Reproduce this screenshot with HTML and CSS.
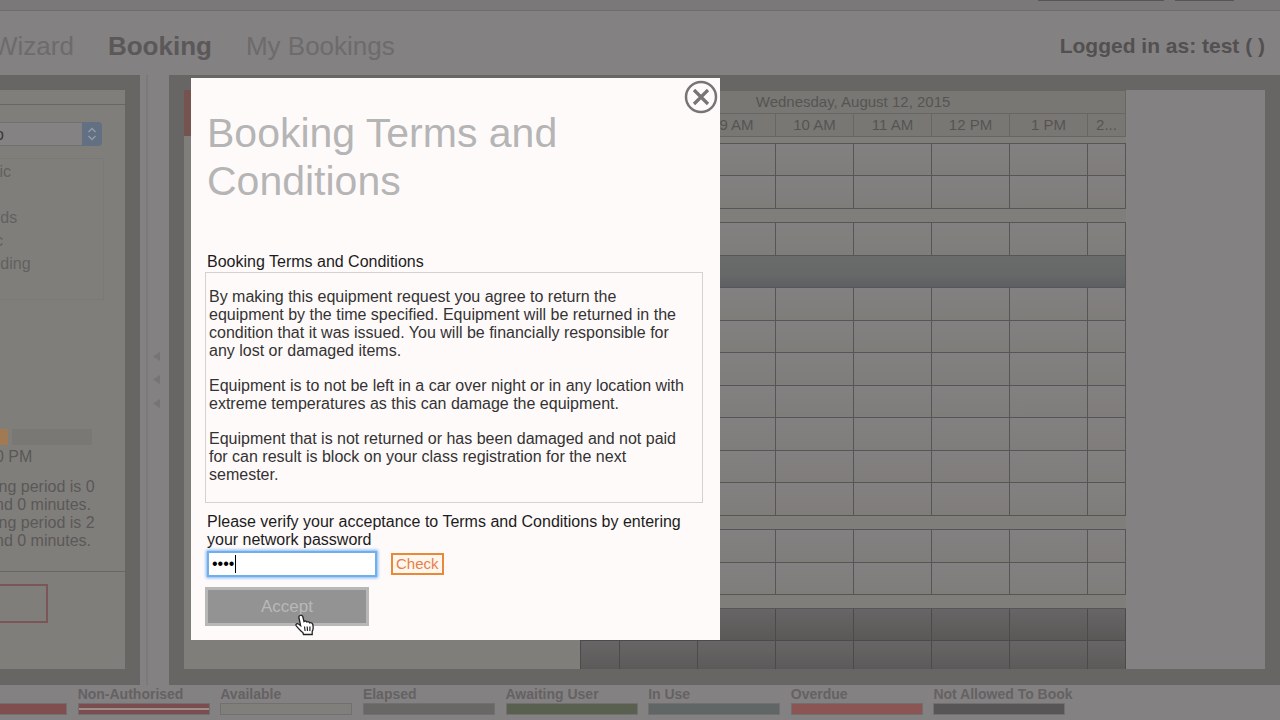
FILE: index.html
```html
<!DOCTYPE html>
<html lang="en">
<head>
  <meta charset="UTF-8">
  <meta name="viewport" content="width=device-width, initial-scale=1.0">
  <title>Booking</title>
  <link rel="stylesheet" href="styles.css">
</head>
<body>
  <div class="topbar"><span class="toplink wide"></span><span class="toplink"></span></div>

  <header class="header">
    <nav class="tabs">
      <a href="#">Wizard</a>
      <a href="#" class="active">Booking</a>
      <a href="#">My Bookings</a>
    </nav>
    <div class="user">Logged in as: test ( )</div>
  </header>

  <main class="main">
    <aside class="sidebar">
      <div class="filter">
        <div class="select-wrap">
          <select class="select" aria-label="Category"><option>o</option></select>
          <svg class="arrows" viewBox="0 0 20 24" width="20" height="24">
            <path d="M6.500 10 L10 6.500 L13.500 10 M6.500 14 L10 17.500 L13.500 14" fill="none" stroke="#929aa6" stroke-width="1.500"/>
          </svg>
        </div>
        <ul class="categories">
          <li>tic</li>
          <li></li>
          <li>rds</li>
          <li>c</li>
          <li>rding</li>
        </ul>
        <div class="slider"><span class="slider-on"></span><span class="slider-off"></span></div>
        <p class="time">0 PM</p>
        <p class="period">ing period is 0<br>nd 0 minutes.<br>ing period is 2<br>nd 0 minutes.</p>
      </div>
      <div class="actions"><button class="outline-btn" type="button" aria-label="Book"></button></div>
    </aside>

    <div class="splitter">
      <svg viewBox="0 0 8 56" width="8" height="56" fill="#777475">
        <path d="M7 0 V9 L0 4.500 Z M7 23 V32 L0 27.500 Z M7 47 V56 L0 51.500 Z"/>
      </svg>
    </div>

    <section class="schedule">
      <div class="resources"><div class="resources-head"></div></div>
      <div class="grid-wrap">
        <table class="grid">
          <colgroup><col class="half"><col><col><col><col><col><col><col class="half"></colgroup>
          <thead>
            <tr><th colspan="8">Wednesday, August 12, 2015</th></tr>
            <tr><th></th><th>8 AM</th><th>9 AM</th><th>10 AM</th><th>11 AM</th><th>12 PM</th><th>1 PM</th><th>2...</th></tr>
          </thead>
          <tbody id="slots"></tbody>
        </table>
      </div>
    </section>
  </main>

  <footer class="legend">
    <div class="key"><span></span><div class="bar red"></div></div>
    <div class="key"><span>Non-Authorised</span><div class="bar striped"></div></div>
    <div class="key"><span>Available</span><div class="bar available"></div></div>
    <div class="key"><span>Elapsed</span><div class="bar elapsed"></div></div>
    <div class="key"><span>Awaiting User</span><div class="bar awaiting"></div></div>
    <div class="key"><span>In Use</span><div class="bar in-use"></div></div>
    <div class="key"><span>Overdue</span><div class="bar overdue"></div></div>
    <div class="key"><span>Not Allowed To Book</span><div class="bar not-allowed"></div></div>
  </footer>

  <div class="modal" role="dialog" aria-labelledby="title">
    <button class="close" type="button" aria-label="Close">
      <svg viewBox="0 0 34 34" width="34" height="34" fill="none" stroke="#777475">
        <circle cx="17" cy="17" r="15" stroke-width="2.500"/>
        <path d="M10 10 L24 24 M24 10 L10 24" stroke-width="3.200"/>
      </svg>
    </button>
    <h1 id="title">Booking Terms and Conditions</h1>
    <h2>Booking Terms and Conditions</h2>
    <div class="terms">
      <p>By making this equipment request you agree to return the equipment by the time specified. Equipment will be returned in the condition that it was issued. You will be financially responsible for any lost or damaged items.</p>
      <p>Equipment is to not be left in a car over night or in any location with extreme temperatures as this can damage the equipment.</p>
      <p>Equipment that is not returned or has been damaged and not paid for can result is block on your class registration for the next semester.</p>
    </div>
    <form class="verify">
      <label for="password">Please verify your acceptance to Terms and Conditions by entering your network password</label>
      <div class="row">
        <div class="field">
          <input type="password" id="password" value="test">
          <span class="caret"></span>
        </div>
        <button class="check" type="button">Check</button>
      </div>
      <button class="accept" type="button">Accept
        <svg class="pointer" viewBox="0 0 20 22" width="20" height="22">
          <path d="M5 1.500 C6.500 0.600 7.600 1.800 7.900 3 L9 7.500 C10 6.600 11.500 7 11.900 8 C13 7.300 14.300 7.800 14.700 8.900 C16 8.300 17.500 9.200 17.800 10.500 C18.500 13.500 18.600 15 17.200 17.500 L17.200 20.500 L8.500 20.500 L7.800 18.500 C5.500 16.800 3.500 14.500 1.200 11.800 C0.300 10 2.200 9 3.500 10 L5.600 11.700 L3.900 3.500 C3.700 2.500 4 1.900 5 1.500 Z" fill="#fff" stroke="#222" stroke-width="1.300"/>
          <path d="M9.500 12.500 L10.100 17 M12.200 12.500 L12.500 17 M14.900 12.500 L14.900 17" stroke="#222" stroke-width="1.200"/>
        </svg>
      </button>
    </form>
  </div>

  <script>
    // one letter per row: s = free slots, g = gap, b = group bar, d = not allowed
    const rows = 'gssgsbsssssssgssgdd';
    document.getElementById('slots').innerHTML = [...rows].map(r => {
      if (r === 'g') return '<tr class="gap"><td colspan="8"></td></tr>';
      if (r === 'b') return '<tr class="group"><td colspan="8"></td></tr>';
      return `<tr class="${r === 'd' ? 'dark' : 'slot'}">${'<td></td>'.repeat(8)}</tr>`;
    }).join('');
  </script>
</body>
</html>
```
FILE: styles.css
```css
* { box-sizing: border-box; }
body { margin: 0; min-height: 100vh; display: flex; flex-direction: column; overflow: hidden; font: 16px/18px "Liberation Sans", Arial, sans-serif; color: #5a5858; background: #848182; }
h1, h2, p, ul { margin: 0; padding: 0; font-weight: normal; }
button, input, select { font-family: inherit; }

.topbar { height: 11px; display: flex; justify-content: flex-end; gap: 11px; padding-right: 46px; background: #7b7879; border-bottom: 1px solid #6f6d6d; }
.toplink { width: 59px; height: 1px; background: #575555; }
.toplink.wide { width: 126px; }

.header { height: 64px; display: flex; justify-content: space-between; align-items: center; padding: 6px 15px 0 0; }
.tabs { display: flex; gap: 34px; margin-left: -7px; font-size: 26px; line-height: 30px; }
.tabs a { color: #6d6b6b; text-decoration: none; }
.tabs a.active { color: #5a5858; font-weight: bold; }
.user { font-size: 21px; line-height: 24px; font-weight: bold; color: #525050; }

.main { height: 610px; display: flex; }
.sidebar { width: 140px; border: 15px solid #676664; border-left: 0; border-bottom-width: 16px; background: #807e7b; overflow: hidden; }
.filter { height: 482px; padding-top: 14px; border-bottom: 1px solid #696765; }
.filter::before { content: ""; display: block; height: 1px; margin-bottom: 17px; background: #696765; }
.select-wrap { position: relative; width: 108px; height: 24px; margin-left: -6px; }
.select { width: 100%; height: 24px; padding: 0; border: 1px solid #716f70; border-radius: 4px; appearance: none; background: #858283; color: #3c3a3a; font-size: 16px; }
.arrows { position: absolute; right: 0; top: 0; background: #637083; border-radius: 0 4px 4px 0; }
.categories { width: 110px; height: 142px; margin: 12px 0 0 -6px; padding-top: 1px; list-style: none; color: #626060; border: 1px solid #7b7976; }
.categories li { height: 23px; line-height: 23px; }
.slider { display: flex; gap: 4px; margin-top: 129px; }
.slider-on { width: 8px; height: 16px; background: #a17a53; }
.slider-off { width: 80px; height: 16px; background: #7a7875; }
.time { margin: 3px 0 0 -5px; }
.period { margin: 12px 0 0 -5px; white-space: nowrap; }
.actions { padding-top: 12px; }
.outline-btn { display: block; width: 54px; height: 39px; margin-left: -6px; border: 2px solid #7c5556; background: none; }

.splitter { width: 29px; display: flex; align-items: center; padding-left: 13px; background: linear-gradient(90deg, transparent 6px, #7c797a 6px, #7c797a 8px, transparent 8px); }
.schedule { flex: 1; display: flex; min-width: 0; border: 15px solid #676664; border-bottom-width: 16px; }
.resources { width: 396px; background: #807e7b; }
.resources-head { height: 46px; background: #75534e; }
.grid-wrap { overflow: hidden; }

.grid { width: 545px; table-layout: fixed; border-collapse: collapse; background: #807e7b; }
.grid col { width: 78px; }
.grid col.half { width: 39px; }
.grid col.half:last-child { width: 38px; }
.grid th { height: 23px; padding: 0; font-size: 15px; line-height: 18px; font-weight: normal; color: #565453; background: #797774; border: 1px solid #686664; }
.grid td { padding: 0; border: 1px solid #575555; }
.grid .slot, .grid .dark { height: 33px; }
.grid .slot:nth-child(even), .grid .dark:nth-child(even) { height: 32px; }
.grid .slot { background: linear-gradient(#838081, #7f7d7a); }
.grid .dark { background: linear-gradient(#686566, #5a5857); }
.grid .dark td { border-color: #4c4a4a; }
.grid .group { height: 32px; background: linear-gradient(#6a6b6b, #666867 60%, #5c5f63); }
.grid .gap { height: 14px; }
.grid .gap:first-child { height: 7px; }
.grid .gap td { border-left-color: transparent; border-right-color: transparent; }

.legend { width: 1141px; height: 35px; display: grid; grid-template-columns: repeat(8, 1fr); margin-left: -65px; padding-top: 1px; font-size: 14px; line-height: 17px; font-weight: bold; color: #646263; white-space: nowrap; overflow: hidden; }
.key span { display: block; height: 17px; }
.bar { width: 132px; height: 12px; border: 1px solid #716f6f; }
.red { background: #804e4f; }
.striped { background: linear-gradient(#7a4e4f 4px, #9c8f8d 4px, #9c8f8d 6px, #7a4e4f 6px); }
.available { background: #807f7b; }
.elapsed { background: #696765; }
.awaiting { background: #596050; }
.in-use { background: #606665; }
.overdue { background: #8a5553; }
.not-allowed { background: #575555; }

.modal { position: absolute; left: 191px; top: 78px; width: 529px; padding: 31px 17px 14px 14px; background: #fffafa; color: #1c1c1c; }
.close { position: absolute; right: 2px; top: 2px; width: 34px; height: 34px; padding: 0; border: 0; background: none; }
.close svg { display: block; }
.modal h1 { padding: 0 60px 0 2px; font-size: 41px; line-height: 48px; color: #b5b5b5; }
.modal h2 { margin: 48px 0 1px 2px; font-size: 16px; line-height: 18px; }
.terms { padding: 15px 11px 18px 3px; border: 1px solid #d2d2ce; color: #333; }
.terms p + p { margin-top: 17px; }
.verify label { display: block; margin: 10px 0 2px 2px; }
.row { display: flex; align-items: center; gap: 14px; padding-left: 2px; }
.field { position: relative; }
.field input { display: block; width: 170px; height: 26px; padding: 0 3px; border: 2px solid #72aeea; outline: 0; box-shadow: 0 0 3px 1px #7ab8f5; background: #fff; color: #000; font-size: 16px; }
.caret { position: absolute; left: 28px; top: 4px; width: 1px; height: 18px; background: #000; }
.check { height: 22px; padding: 0 3px; border: 2px solid #e8893a; background: #fff6ee; color: #e5804a; font-size: 15px; line-height: 16px; }
.accept { position: relative; width: 164px; height: 39px; margin-top: 10px; padding: 0; border: 3px solid #b8b7b7; background: #939393; color: #b9b8b8; font-size: 17px; line-height: 20px; display: block; }
.pointer { position: absolute; left: 87px; top: 24px; }
```
